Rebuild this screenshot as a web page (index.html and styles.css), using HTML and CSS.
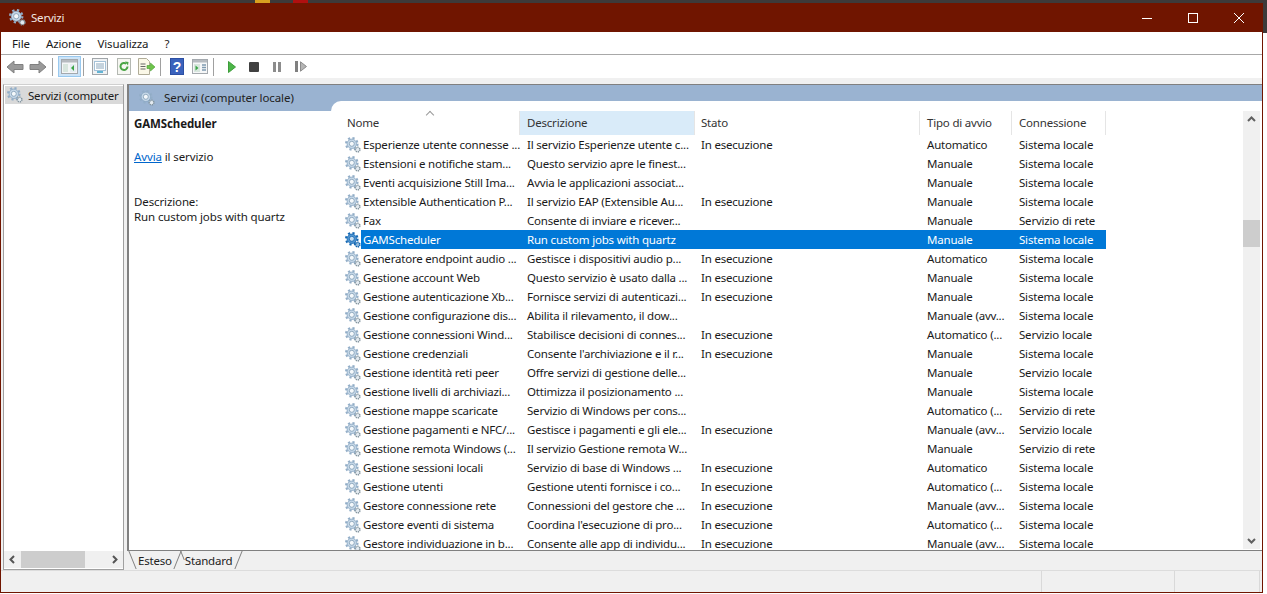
FILE: index.html
```html
<!DOCTYPE html>
<html lang="it">
<head>
  <meta charset="UTF-8">
  <title>Servizi</title>
  <link rel="stylesheet" href="styles.css">
</head>
<body>
  <svg class="defs" width="0" height="0">
    <symbol id="gear" viewBox="0 0 16 16">
      <circle cx="6.800" cy="6.800" r="5.800" fill="none" stroke="#93aec8" stroke-width="2" stroke-dasharray="2.200 2.350"/>
      <circle cx="6.800" cy="6.800" r="4.700" fill="#c6d8e8" stroke="#86a5c0" stroke-width=".8"/>
      <circle cx="6.800" cy="6.800" r="2.500" fill="#f4f8fb" stroke="#7f9cb4" stroke-width=".8"/>
      <circle cx="12.600" cy="12.600" r="2.300" fill="#e4ebf1" stroke="#84959f" stroke-width="1.500" stroke-dasharray="1.200 .7"/>
    </symbol>
    <symbol id="gear-sel" viewBox="0 0 16 16">
      <circle cx="6.800" cy="6.800" r="5.800" fill="none" stroke="#1468b4" stroke-width="2" stroke-dasharray="2.200 2.350"/>
      <circle cx="6.800" cy="6.800" r="4.700" fill="#4f95d2" stroke="#0f62ad" stroke-width=".8"/>
      <circle cx="6.800" cy="6.800" r="2.500" fill="#c9dff1" stroke="#0f62ad" stroke-width=".8"/>
      <circle cx="12.600" cy="12.600" r="2.300" fill="#8db7da" stroke="#0f62ad" stroke-width="1.500" stroke-dasharray="1.200 .7"/>
    </symbol>
  </svg>

  <div class="desk-top"><i class="spot spot-a"></i><i class="spot spot-b"></i></div>
  <div class="window">
    <header class="titlebar">
      <svg class="title-icon" width="17" height="17"><use href="#gear"/></svg>
      <span class="title-text">Servizi</span>
      <div class="win-buttons">
        <svg width="12" height="12" viewBox="0 0 12 12"><path d="M1 6.500h10" stroke="#fff" fill="none"/></svg>
        <svg width="12" height="12" viewBox="0 0 12 12"><rect x="1.500" y="1.500" width="9" height="9" stroke="#fff" fill="none"/></svg>
        <svg width="12" height="12" viewBox="0 0 12 12"><path d="M1 1l10 10M11 1L1 11" stroke="#fff" fill="none"/></svg>
      </div>
    </header>

    <nav class="menubar">
      <span>File</span><span>Azione</span><span>Visualizza</span><span>?</span>
    </nav>

    <div class="toolbar">
      <svg class="tool" width="18" height="16" viewBox="0 0 18 16"><path d="M1 8l7-6v3.500h9v5H8V14z" fill="#9a9a9a" stroke="#808080"/></svg>
      <svg class="tool tool-fwd" width="18" height="16" viewBox="0 0 18 16"><path d="M17 8l-7-6v3.500H1v5h9V14z" fill="#9a9a9a" stroke="#808080"/></svg>
      <i class="sep"></i>
      <span class="tool-on">
        <svg width="17" height="15" viewBox="0 0 17 15"><rect x=".5" y=".5" width="16" height="14" fill="#f4f6f7" stroke="#a4a9ae"/><path d="M1 1h15v2.500H1z" fill="#b6bbc0"/><path d="M2 5h5v8H2z" fill="#d8e6de"/><path d="M9 5h6v8H9z" fill="#e6edf2"/><path d="M13 6v6l-3-3z" fill="#3aa547"/></svg>
      </span>
      <i class="sep"></i>
      <svg class="tool tool-list" width="16" height="17" viewBox="0 0 16 17"><rect x=".5" y=".5" width="15" height="16" fill="#f0f2f4" stroke="#a0a5a9"/><rect x="2.500" y="3.500" width="11" height="9" fill="#fff" stroke="#a5c2d8"/><path d="M4 6h8M4 8h8M4 10h8" stroke="#8aa6bc"/><path d="M5 14h6" stroke="#62b4d4" stroke-width="2"/></svg>
      <svg class="tool tool-refresh" width="14" height="17" viewBox="0 0 14 17"><rect x=".5" y=".5" width="13" height="16" fill="#f6f7f2" stroke="#b4b8b2"/><path d="M10.500 8.500a3.500 3.500 0 1 1-1.200-2.700" fill="none" stroke="#4aa545" stroke-width="2"/><path d="M8 3.500l3.500.5-.5 3.500z" fill="#4aa545"/></svg>
      <svg class="tool tool-export" width="17" height="17" viewBox="0 0 17 17"><path d="M.5.5h8l3 3v13H.5z" fill="#fbf8e8" stroke="#b0ac98"/><path d="M2.500 6h5M2.500 8.500h5M2.500 11h5" stroke="#666"/><path d="M9 7.500h3.500V5l4.500 4-4.500 4v-2.500H9z" fill="#6ec54b" stroke="#4a9c32" stroke-width=".6"/></svg>
      <i class="sep"></i>
      <svg class="tool tool-help" width="14" height="17" viewBox="0 0 14 17"><rect width="14" height="17" fill="#2c4fa3"/><rect x="1" y="1" width="12" height="15" fill="#3a62bc"/><text x="7" y="13.500" text-anchor="middle" class="help-mark">?</text></svg>
      <svg class="tool tool-props" width="16" height="15" viewBox="0 0 16 15"><rect x=".5" y=".5" width="15" height="14" fill="#f6f7f8" stroke="#a4a9ae"/><path d="M1 1h14v2.500H1z" fill="#b6bbc0"/><path d="M2 5h6v8H2z" fill="#d8e6de"/><path d="M3.500 6.500v5l3-2.500z" fill="#3aa547"/><path d="M10 6h4M10 8.500h4M10 11h4" stroke="#7f9ab0" stroke-width="1.500"/></svg>
      <i class="sep"></i>
      <svg class="tool tool-play" width="8" height="12" viewBox="0 0 8 12"><path d="M.5.500v11l7-5.500z" fill="#4cb648" stroke="#3d9c3a"/></svg>
      <i class="media stop"></i>
      <i class="media pause"></i>
      <svg class="tool tool-resume" width="12" height="11" viewBox="0 0 12 11"><rect width="3" height="11" fill="#808080"/><path d="M5.500.8v9.400l6-4.700z" fill="#b4b4b4" stroke="#8c8c8c"/></svg>
    </div>

    <div class="content">
      <aside class="tree">
        <div class="tree-body">
          <div class="tree-item">
            <svg width="16" height="16"><use href="#gear"/></svg>
            <span>Servizi (computer</span>
          </div>
        </div>
        <div class="hscroll">
          <svg class="arrow" width="17" height="17" viewBox="0 0 17 17"><path d="M10 5l-3.500 3.500L10 12" fill="none" stroke="#555" stroke-width="2"/></svg>
          <span class="hscroll-track"><i class="hscroll-thumb"></i></span>
          <svg class="arrow" width="17" height="17" viewBox="0 0 17 17"><path d="M7 5l3.500 3.500L7 12" fill="none" stroke="#555" stroke-width="2"/></svg>
        </div>
      </aside>

      <section class="main">
        <div class="main-box">
          <div class="band">
            <svg width="16" height="16"><use href="#gear"/></svg>
            <span>Servizi (computer locale)</span>
          </div>
          <div class="main-body">
            <div class="detail">
              <h3>GAMScheduler</h3>
              <p class="start"><a>Avvia</a> il servizio</p>
              <p class="desc-label">Descrizione:</p>
              <p class="desc-text">Run custom jobs with quartz</p>
            </div>
            <div class="list-wrap">
              <div class="list">
                <div class="row head">
                  <span class="sorted">Nome</span>
                  <span class="hot">Descrizione</span>
                  <span>Stato</span>
                  <span>Tipo di avvio</span>
                  <span>Connessione</span>
                </div>
                <div class="rows">
                  <div class="row"><span class="name"><svg width="16" height="16"><use href="#gear"/></svg>Esperienze utente connesse ...</span><span>Il servizio Esperienze utente c...</span><span>In esecuzione</span><span>Automatico</span><span>Sistema locale</span></div>
                  <div class="row"><span class="name"><svg width="16" height="16"><use href="#gear"/></svg>Estensioni e notifiche stam...</span><span>Questo servizio apre le finest...</span><span></span><span>Manuale</span><span>Sistema locale</span></div>
                  <div class="row"><span class="name"><svg width="16" height="16"><use href="#gear"/></svg>Eventi acquisizione Still Ima...</span><span>Avvia le applicazioni associat...</span><span></span><span>Manuale</span><span>Sistema locale</span></div>
                  <div class="row"><span class="name"><svg width="16" height="16"><use href="#gear"/></svg>Extensible Authentication P...</span><span>Il servizio EAP (Extensible Au...</span><span>In esecuzione</span><span>Manuale</span><span>Sistema locale</span></div>
                  <div class="row"><span class="name"><svg width="16" height="16"><use href="#gear"/></svg>Fax</span><span>Consente di inviare e ricever...</span><span></span><span>Manuale</span><span>Servizio di rete</span></div>
                  <div class="row selected"><span class="name"><svg width="16" height="16"><use href="#gear-sel"/></svg><em>GAMScheduler</em></span><span>Run custom jobs with quartz</span><span></span><span>Manuale</span><span>Sistema locale</span></div>
                  <div class="row"><span class="name"><svg width="16" height="16"><use href="#gear"/></svg>Generatore endpoint audio ...</span><span>Gestisce i dispositivi audio p...</span><span>In esecuzione</span><span>Automatico</span><span>Sistema locale</span></div>
                  <div class="row"><span class="name"><svg width="16" height="16"><use href="#gear"/></svg>Gestione account Web</span><span>Questo servizio è usato dalla ...</span><span>In esecuzione</span><span>Manuale</span><span>Sistema locale</span></div>
                  <div class="row"><span class="name"><svg width="16" height="16"><use href="#gear"/></svg>Gestione autenticazione Xb...</span><span>Fornisce servizi di autenticazi...</span><span>In esecuzione</span><span>Manuale</span><span>Sistema locale</span></div>
                  <div class="row"><span class="name"><svg width="16" height="16"><use href="#gear"/></svg>Gestione configurazione dis...</span><span>Abilita il rilevamento, il dow...</span><span></span><span>Manuale (avv...</span><span>Sistema locale</span></div>
                  <div class="row"><span class="name"><svg width="16" height="16"><use href="#gear"/></svg>Gestione connessioni Wind...</span><span>Stabilisce decisioni di connes...</span><span>In esecuzione</span><span>Automatico (...</span><span>Servizio locale</span></div>
                  <div class="row"><span class="name"><svg width="16" height="16"><use href="#gear"/></svg>Gestione credenziali</span><span>Consente l'archiviazione e il r...</span><span>In esecuzione</span><span>Manuale</span><span>Sistema locale</span></div>
                  <div class="row"><span class="name"><svg width="16" height="16"><use href="#gear"/></svg>Gestione identità reti peer</span><span>Offre servizi di gestione delle...</span><span></span><span>Manuale</span><span>Servizio locale</span></div>
                  <div class="row"><span class="name"><svg width="16" height="16"><use href="#gear"/></svg>Gestione livelli di archiviazi...</span><span>Ottimizza il posizionamento ...</span><span></span><span>Manuale</span><span>Sistema locale</span></div>
                  <div class="row"><span class="name"><svg width="16" height="16"><use href="#gear"/></svg>Gestione mappe scaricate</span><span>Servizio di Windows per cons...</span><span></span><span>Automatico (...</span><span>Servizio di rete</span></div>
                  <div class="row"><span class="name"><svg width="16" height="16"><use href="#gear"/></svg>Gestione pagamenti e NFC/...</span><span>Gestisce i pagamenti e gli ele...</span><span>In esecuzione</span><span>Manuale (avv...</span><span>Servizio locale</span></div>
                  <div class="row"><span class="name"><svg width="16" height="16"><use href="#gear"/></svg>Gestione remota Windows (...</span><span>Il servizio Gestione remota W...</span><span></span><span>Manuale</span><span>Servizio di rete</span></div>
                  <div class="row"><span class="name"><svg width="16" height="16"><use href="#gear"/></svg>Gestione sessioni locali</span><span>Servizio di base di Windows ...</span><span>In esecuzione</span><span>Automatico</span><span>Sistema locale</span></div>
                  <div class="row"><span class="name"><svg width="16" height="16"><use href="#gear"/></svg>Gestione utenti</span><span>Gestione utenti fornisce i co...</span><span>In esecuzione</span><span>Automatico (...</span><span>Sistema locale</span></div>
                  <div class="row"><span class="name"><svg width="16" height="16"><use href="#gear"/></svg>Gestore connessione rete</span><span>Connessioni del gestore che ...</span><span>In esecuzione</span><span>Manuale (avv...</span><span>Sistema locale</span></div>
                  <div class="row"><span class="name"><svg width="16" height="16"><use href="#gear"/></svg>Gestore eventi di sistema</span><span>Coordina l'esecuzione di pro...</span><span>In esecuzione</span><span>Automatico (...</span><span>Sistema locale</span></div>
                  <div class="row"><span class="name"><svg width="16" height="16"><use href="#gear"/></svg>Gestore individuazione in b...</span><span>Consente alle app di individu...</span><span>In esecuzione</span><span>Manuale (avv...</span><span>Sistema locale</span></div>
                </div>
              </div>
              <div class="vscroll">
                <svg width="17" height="17" viewBox="0 0 17 17"><path d="M5 10l3.500-3.500L12 10" fill="none" stroke="#606060" stroke-width="2"/></svg>
                <span class="vscroll-track"><i class="vscroll-thumb"></i></span>
                <svg width="17" height="17" viewBox="0 0 17 17"><path d="M5 7l3.500 3.500L12 7" fill="none" stroke="#606060" stroke-width="2"/></svg>
              </div>
            </div>
          </div>
        </div>
        <div class="tabs">
          <span class="tab tab-active">Esteso</span>
          <span class="tab tab-std">Standard</span>
        </div>
      </section>
    </div>

    <footer class="statusbar">
      <i></i><i></i><i></i>
    </footer>
  </div>
</body>
</html>
```

FILE: styles.css
```css
* {
  box-sizing: border-box;
}

html, body {
  margin: 0;
  height: 100%;
  overflow: hidden;
}

body {
  background: linear-gradient(#3d3a3a 33px, #fff 33px);
  font-family: "Noto Sans", "Open Sans", sans-serif;
  font-size: 11.5px;
  letter-spacing: -0.2px;
  color: #1a1a1a;
  width: 1267px;
  height: 594px;
}

.defs {
  display: block;
  height: 0;
}

.desk-top {
  height: 3px;
  background: #3d3a3a;
  display: flex;
}

.spot {
  display: block;
  height: 3px;
}

.spot-a {
  width: 15px;
  margin-left: 255px;
  background: #d8a020;
}

.spot-b {
  width: 15px;
  margin-left: 23px;
  background: #b01010;
}

.window {
  width: 1263px;
  height: 590px;
  border: 1px solid #701500;
  border-top: 0;
  display: flex;
  flex-direction: column;
  background: #f0f0f0;
}

/* title bar */
.titlebar {
  height: 29px;
  flex: none;
  background: #701500;
  color: #f2e6e2;
  display: flex;
  align-items: center;
  padding-left: 8px;
}

.title-text {
  margin-left: 5px;
}

.win-buttons {
  margin-left: auto;
  display: flex;
  gap: 34px;
  padding-right: 17px;
}

.menubar {
  height: 23px;
  flex: none;
  background: #fff;
  border-bottom: 1px solid #a8a8a8;
  display: flex;
  align-items: center;
  gap: 16px;
  padding-left: 11px;
  letter-spacing: -0.12px;
}

/* toolbar */
.toolbar {
  height: 23px;
  flex: none;
  background: #fff;
  display: flex;
  align-items: center;
  padding-left: 5px;
}

.tool {
  flex: none;
}

.tool-fwd {
  margin-left: 5px;
}

.sep {
  display: block;
  width: 1px;
  height: 18px;
  background: #a0a0a0;
  margin: 0 5px;
}

.tool-on {
  width: 23px;
  height: 21px;
  background: #cde4f7;
  border: 1px solid #99c9ef;
  display: flex;
  align-items: center;
  justify-content: center;
  margin-right: -3px;
}

.tool-list {
  margin-left: 3px;
}

.tool-refresh {
  margin-left: 9px;
}

.tool-export {
  margin-left: 7px;
}

.tool-help {
  margin-left: 4px;
}

.tool-props {
  margin-left: 8px;
}

.help-mark {
  fill: #fff;
  font-size: 14px;
  font-weight: 700;
  font-family: "Liberation Sans", sans-serif;
}

.tool-play {
  margin-left: 9px;
}

.media {
  display: block;
}

.stop {
  width: 10px;
  height: 10px;
  background: #404040;
  border-radius: 1px;
  margin-left: 13px;
}

.pause {
  width: 8px;
  height: 10px;
  margin-left: 14px;
  border-left: 3px solid #8c8c8c;
  border-right: 3px solid #8c8c8c;
}

.tool-resume {
  margin-left: 14px;
}

/* panes */
.content {
  flex: 1;
  min-height: 0;
  display: flex;
  padding: 6px 0 0 2px;
  gap: 3px;
  border-bottom: 1px solid #dcdcdc;
}

.tree {
  width: 121px;
  flex: none;
  height: 486px;
  border: 1px solid #a0a0a0;
  border-top-color: #d0d0d0;
  background: #fff;
  display: flex;
  flex-direction: column;
}

.tree-body {
  flex: 1;
  min-height: 0;
}

.tree-item {
  height: 18px;
  margin: 1px 0 0 1px;
  background: #d9d9d9;
  display: flex;
  align-items: center;
  gap: 5px;
  padding-left: 2px;
  overflow: hidden;
  white-space: nowrap;
}

.tree-item svg {
  flex: none;
}

.hscroll {
  height: 17px;
  margin-bottom: 1px;
  background: #f0f0f0;
  display: flex;
  align-items: center;
  flex: none;
}

.arrow {
  flex: none;
}

.hscroll-track {
  flex: 1;
  height: 17px;
}

.hscroll-thumb {
  display: block;
  width: 64px;
  height: 17px;
  background: #cdcdcd;
}

.main {
  flex: 1;
  min-width: 0;
  display: flex;
  flex-direction: column;
}

.main-box {
  height: 466px;
  flex: none;
  border-top: 1px solid #808080;
  border-left: 2px solid #808080;
  background: #fff;
  display: flex;
  flex-direction: column;
}

.band {
  height: 26px;
  flex: none;
  background: #9ab3d1;
  display: flex;
  align-items: flex-start;
  gap: 9px;
  padding: 5px 0 0 10px;
  line-height: 16px;
  color: #222;
  margin-bottom: -10px;
  letter-spacing: -0.08px;
}

.main-body {
  flex: 1;
  min-height: 0;
  display: flex;
}

.detail {
  width: 202px;
  flex: none;
  padding: 15px 0 0 5px;
  line-height: 15px;
  letter-spacing: -0.12px;
}

.detail h3 {
  margin: 0;
  font-size: 11.5px;
  line-height: 16px;
  font-weight: 700;
}

.detail p {
  margin: 0;
}

.detail a {
  color: #0066cc;
  text-decoration: underline;
}

.detail .start {
  padding-top: 17px;
  line-height: 16px;
}

.detail .desc-label {
  padding-top: 29px;
}

.list-wrap {
  flex: 1;
  min-width: 0;
  display: flex;
  background: #fff;
  border-top-left-radius: 10px;
  position: relative;
}

.list {
  flex: 1;
  min-width: 0;
  padding: 10px 0 0 9px;
  display: flex;
  flex-direction: column;
}

.row {
  display: grid;
  grid-template-columns: 180px 174px 226px 92px 94px;
  width: 766px;
  height: 19px;
  align-items: stretch;
  white-space: nowrap;
}

.row > span {
  padding-left: 7px;
  line-height: 19px;
}

.row > .name {
  padding-left: 5px;
  display: flex;
  align-items: center;
  gap: 2px;
}

.name svg {
  flex: none;
}

.head {
  height: 24px;
  flex: none;
  color: #333;
}

.head > span {
  height: 24px;
  line-height: 23px;
  border-right: 1px solid #e5e5e5;
}

.head > .hot {
  background: #d9ebf9;
  width: 175px;
}

.sorted {
  position: relative;
}

.sorted::after {
  content: "";
  position: absolute;
  left: 87px;
  top: 1px;
  width: 5px;
  height: 5px;
  border-left: 1px solid #9a9a9a;
  border-top: 1px solid #9a9a9a;
  transform: rotate(45deg);
}

.rows {
  flex: 1;
  min-height: 0;
  overflow: hidden;
}

.selected > span {
  background: #0078d7;
  color: #fff;
}

.row > .name em {
  font-style: normal;
  flex: 1;
  background: #0078d7;
  padding-left: 2px;
}

.selected > .name {
  background: #fff;
  gap: 0;
}

.vscroll {
  width: 17px;
  flex: none;
  height: 438px;
  margin: 10px 2px 0 0;
  background: #f0f0f0;
  display: flex;
  flex-direction: column;
}

.vscroll svg {
  flex: none;
}

.vscroll-track {
  flex: 1;
}

.vscroll-thumb {
  display: block;
  height: 27px;
  margin-top: 92px;
  background: #cdcdcd;
}

/* tabs */
.tabs {
  height: 20px;
  flex: none;
  display: flex;
  align-items: center;
  padding-left: 11px;
  border-top: 1px solid #808080;
  background: #f0f0f0;
}

.tab {
  position: relative;
  line-height: 19px;
  color: #222;
}

.tab-active {
  padding-right: 13px;
}

.tab::before,
.tab::after {
  content: "";
  position: absolute;
  top: 0;
  height: 18px;
  width: 1px;
  background: #808080;
}

.tab-active::before {
  left: -6px;
  transform: skewX(22deg);
}

.tab-active::after {
  right: 7px;
  transform: skewX(-22deg);
}

.tab-std::before {
  height: 9px;
  left: -3px;
  transform: skewX(22deg);
}

.tab-std::after {
  right: -7px;
  transform: skewX(-22deg);
}

.statusbar {
  flex: none;
  height: 21px;
  display: flex;
  justify-content: flex-end;
  background: #f0f0f0;
}

.statusbar i {
  display: block;
  width: 1px;
  background: #d9d9d9;
}

.statusbar i:nth-child(1) {
  margin-right: 132px;
}

.statusbar i:nth-child(2) {
  margin-right: 84px;
}

.statusbar i:nth-child(3) {
  margin-right: 2px;
}
```
